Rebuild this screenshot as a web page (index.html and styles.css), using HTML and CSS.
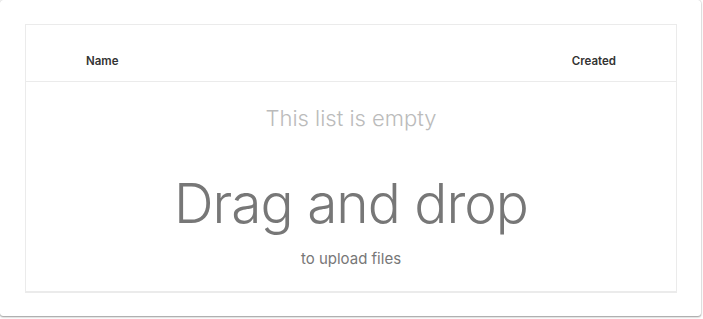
FILE: index.html
```html
<!DOCTYPE html>
<html>
<head>
<meta charset="utf-8">
<link rel="stylesheet" href="styles.css">
</head>
<body>
<div class="card">
  <div class="table">
    <div class="thead">
      <span class="th">Name</span>
      <span class="th">Created</span>
    </div>
    <div class="empty">
      <div class="empty-title">This list is empty</div>
      <div class="drop-title">Drag and drop</div>
      <div class="drop-sub">to upload files</div>
    </div>
  </div>
</div>
</body>
</html>
```

FILE: styles.css
```css
html, body {
  margin: 0;
  padding: 0;
  background: #ffffff;
}
body {
  font-family: "Inter", "Lato", sans-serif;
  width: 703px;
  height: 319px;
  overflow: hidden;
}
.card {
  box-sizing: border-box;
  width: 701px;
  height: 316px;
  background: #fff;
  border-radius: 3px;
  box-shadow: 0 1px 2px rgba(0,0,0,0.4), 0 0 1px rgba(0,0,0,0.25);
  padding: 24px 24px 23px 25px;
}
.table {
  box-sizing: border-box;
  height: 269px;
  border: 1px solid #ebebeb;
  border-bottom: 2px solid #ebebeb;
  display: flex;
  flex-direction: column;
}
.thead {
  box-sizing: border-box;
  height: 57px;
  border-bottom: 1px solid #ebebeb;
  display: flex;
  justify-content: space-between;
  align-items: center;
  padding: 16px 60px 0 60px;
}
.th {
  font-size: 11.5px;
  font-weight: 600;
  color: #333;
}
.empty {
  display: flex;
  flex-direction: column;
  align-items: center;
  text-align: center;
}
.empty-title {
  margin-top: 21px;
  font-size: 22px;
  font-weight: 300;
  color: #bbbbbb;
  line-height: 30px;
}
.drop-title {
  margin-top: 37px;
  font-size: 55px;
  font-weight: 300;
  letter-spacing: -1px;
  color: #777777;
  line-height: 66px;
}
.drop-sub {
  margin-top: 13px;
  font-size: 15px;
  font-weight: 400;
  color: #777777;
  line-height: 20px;
}
```
